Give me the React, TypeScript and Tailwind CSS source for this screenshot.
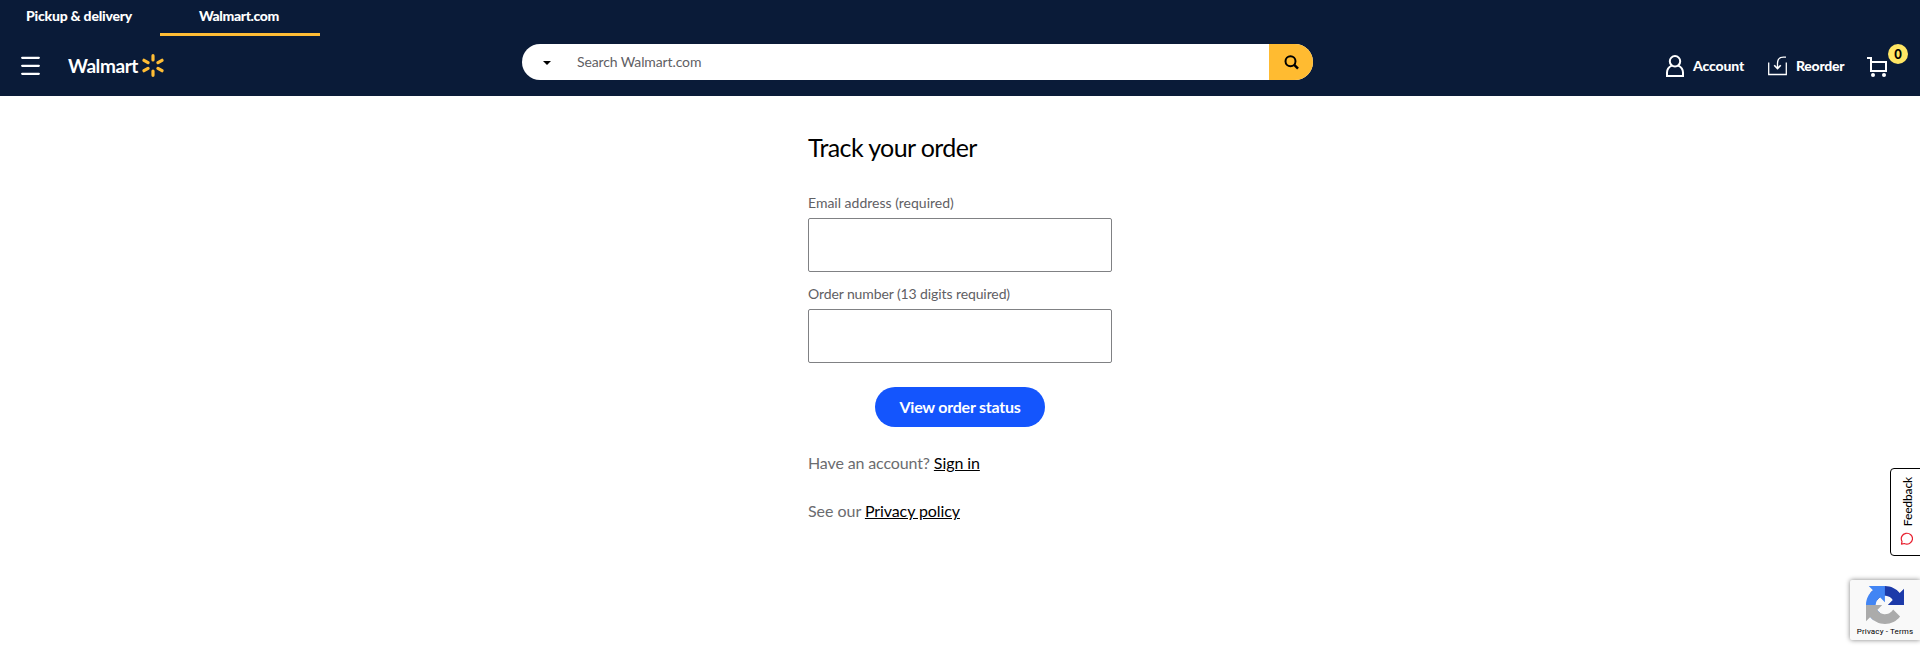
import React from "react";

function MenuIcon() {
  return (
    <svg className="h-5 w-[19px]" viewBox="0 0 19 20" stroke="#fff" strokeWidth="2.3" strokeLinecap="round">
      <path d="M1.2 1.800h16.600M1.200 9.800h16.600M1.200 17.800h16.600" />
    </svg>
  );
}

function Spark() {
  return (
    <svg className="h-6 w-[22px]" viewBox="0 0 22 24" stroke="#ffbd35" strokeWidth="3.2" strokeLinecap="round">
      <path d="M11 1.700v4.300M11 17v4.300M2 6.300l4 2.300M2 16.700l4-2.300M20 6.300l-4 2.300M20 16.700l-4-2.300" />
    </svg>
  );
}

function SearchIcon() {
  return (
    <svg className="h-[15px] w-[15px]" viewBox="0 0 15 15" fill="none" stroke="#000" strokeWidth="2">
      <circle cx="6.5" cy="6.2" r="5" />
      <path d="M10 9.7l4 4" strokeWidth="2.4" />
    </svg>
  );
}

function AccountIcon() {
  return (
    <svg className="h-[22px] w-[18px]" viewBox="0 0 18 22" fill="none" stroke="#fff" strokeWidth="2">
      <circle cx="9" cy="6.3" r="5.2" />
      <path d="M5.7 10.6C2.7 12 1 14.4 1 17.6V21h16v-3.400c0-3.200-1.700-5.600-4.700-7" />
    </svg>
  );
}

function ReorderIcon() {
  return (
    <svg className="h-5 w-[19px]" viewBox="0 0 19 20" fill="none" stroke="#fff" strokeWidth="1.3">
      <path d="M.7 6.500V18.500H18.300V6.500" />
      <path d="M18 1.200h-2.500c-4 0-6 2-6 6V12" />
      <path d="M6.200 9.200l3.300 3.300 3.300-3.300" strokeWidth="1.600" />
    </svg>
  );
}

function CartIcon() {
  return (
    <svg className="h-[21px] w-[21px]" viewBox="0 0 21 21" fill="none" stroke="#fff" strokeWidth="2">
      <path d="M0 2H4V15h15V6H4" />
      <circle cx="6" cy="19" r="2" fill="#fff" stroke="none" />
      <circle cx="17" cy="19" r="2" fill="#fff" stroke="none" />
    </svg>
  );
}

function BubbleIcon() {
  return (
    <svg className="h-[13px] w-[13px]" viewBox="0 0 13 13" fill="none" stroke="#e8202f" strokeWidth="1.200">
      <path d="M1.500 12.200L2 9.300A5.600 5.400 0 1 1 4.400 11.500Z" strokeLinejoin="round" />
    </svg>
  );
}

function RecaptchaLogo() {
  return (
    <svg className="h-[38px] w-[38px]" viewBox="0 0 64 64">
      <path fill="#1c3aa9" d="M64 31.955l-.033-1.370V4.687l-7.160 7.160C50.948 4.674 42.033.093 32.050.093c-10.400 0-19.622 4.960-25.458 12.640l11.736 11.860a15.550 15.550 0 0 1 4.754-5.334c2.050-1.600 4.952-2.906 8.968-2.906.485 0 .860.057 1.135.163 4.976.393 9.288 3.140 11.828 7.124l-8.307 8.307L64 31.953" />
      <path fill="#4285f4" d="M31.862.094l-1.370.033H4.594l7.160 7.160C4.580 13.147 0 22.060 0 32.046c0 10.400 4.960 19.622 12.640 25.458L24.500 45.768a15.550 15.550 0 0 1-5.334-4.754c-1.600-2.050-2.906-4.952-2.906-8.968 0-.485.057-.860.163-1.135.393-4.976 3.140-9.288 7.124-11.828l8.307 8.307L31.860.095" />
      <path fill="#ababab" d="M.001 32.045l.033 1.370v25.898l7.160-7.160c5.860 7.173 14.774 11.754 24.760 11.754 10.400 0 19.622-4.960 25.458-12.640l-11.736-11.860a15.550 15.550 0 0 1-4.754 5.334c-2.050 1.600-4.952 2.906-8.968 2.906-.485 0-.860-.057-1.135-.163-4.976-.393-9.288-3.140-11.828-7.124l8.307-8.307c-10.522.040-22.400.066-27.295-.005" />
    </svg>
  );
}

function Header() {
  return (
    <header className="flex h-24 flex-col bg-[#0a1b38] text-white">
      <nav className="flex h-9 text-[14px] leading-[32px] font-black">
        <a className="w-40 pl-[26px] tracking-[-0.220px]">Pickup &amp; delivery</a>
        <a className="w-40 border-b-[3px] border-[#ffbd35] pl-[39px] tracking-[-0.370px]">Walmart.com</a>
      </nav>
      <div className="flex h-[60px] items-start">
        <div className="flex w-[522px] items-center pt-[18px] pl-[21px]">
          <MenuIcon />
          <div className="ml-7 flex items-center">
            <span className="w-[74px] text-[19px] leading-[22px] font-bold tracking-[-0.410px]">Walmart</span>
            <Spark />
          </div>
        </div>
        <form className="mt-2 flex h-9 w-[791px] overflow-hidden rounded-full bg-white">
          <div className="flex w-[55px] items-center pt-0.5 pl-[21px]">
            <svg className="h-1 w-2" viewBox="0 0 8 4"><path d="M0 0h8L4 4z" /></svg>
          </div>
          <div className="flex-1 text-[14px] leading-9 tracking-[-0.120px] text-[#5f6064]">Search Walmart.com</div>
          <button type="button" className="flex h-9 w-11 items-center justify-center bg-[#ffbb31]">
            <SearchIcon />
          </button>
        </form>
        <div className="relative ml-[353px] flex items-center pt-[18px] text-[14px] leading-6 font-black">
          <AccountIcon />
          <span className="ml-[9px] w-[75px] tracking-[-0.120px]">Account</span>
          <ReorderIcon />
          <span className="ml-[9px] w-[71px] tracking-[-0.250px]">Reorder</span>
          <CartIcon />
          <span className="absolute top-2 right-[-20px] flex h-5 w-5 items-center justify-center rounded-full bg-[#ffe664] text-[13px] text-black">
            0
          </span>
        </div>
      </div>
    </header>
  );
}

export default function App() {
  return (
    <div className="relative h-[654px] overflow-hidden bg-white font-[Lato,sans-serif]">
      <Header />
      <main className="ml-[808px] flex w-[304px] flex-col pt-[35px]">
        <h1 className="text-[25px] leading-8 tracking-[-0.600px] text-black">Track your order</h1>
        <label className="mt-[31px] text-[14px] leading-[18px] text-[#5f6064]">Email address (required)</label>
        <input className="mt-[6px] h-[54px] rounded-[2px] border border-[#808184]" />
        <label className="mt-[13px] text-[14px] leading-[18px] tracking-[-0.100px] text-[#5f6064]">
          Order number (13 digits required)
        </label>
        <input className="mt-[6px] h-[54px] rounded-[2px] border border-[#808184]" />
        <button className="mt-6 ml-[67px] h-10 w-[170px] rounded-full bg-[#1455fd] text-[16px] font-bold tracking-[-0.240px] text-white">
          View order status
        </button>
        <p className="mt-6 text-[16px] leading-6 tracking-[-0.130px] text-[#6b6c6f]">
          Have an account? <a className="tracking-[-0.080px] text-black underline">Sign in</a>
        </p>
        <p className="mt-6 text-[16px] leading-6 tracking-[-0.040px] text-[#6b6c6f]">
          See our <a className="tracking-[-0.090px] text-black underline">Privacy policy</a>
        </p>
      </main>
      <button className="absolute top-[468px] right-[-3px] flex h-[88px] w-[33px] flex-col items-center rounded-l-[4px] border border-black bg-white pt-2">
        <span className="translate-x-px rotate-180 text-[12px] leading-[16px] font-medium tracking-[-0.150px] text-black [writing-mode:vertical-rl]">
          Feedback
        </span>
        <span className="mt-[6px]">
          <BubbleIcon />
        </span>
      </button>
      <aside className="absolute top-[580px] right-0 flex h-[60px] w-[70px] flex-col items-center rounded-l-[2px] bg-[#f9f9f9] pt-[6px] shadow-[0_0_5px_gray]">
        <RecaptchaLogo />
        <span className="font-[Roboto,sans-serif] text-[8px] leading-[15px] tracking-[0.140px] text-black">Privacy - Terms</span>
      </aside>
    </div>
  );
}
